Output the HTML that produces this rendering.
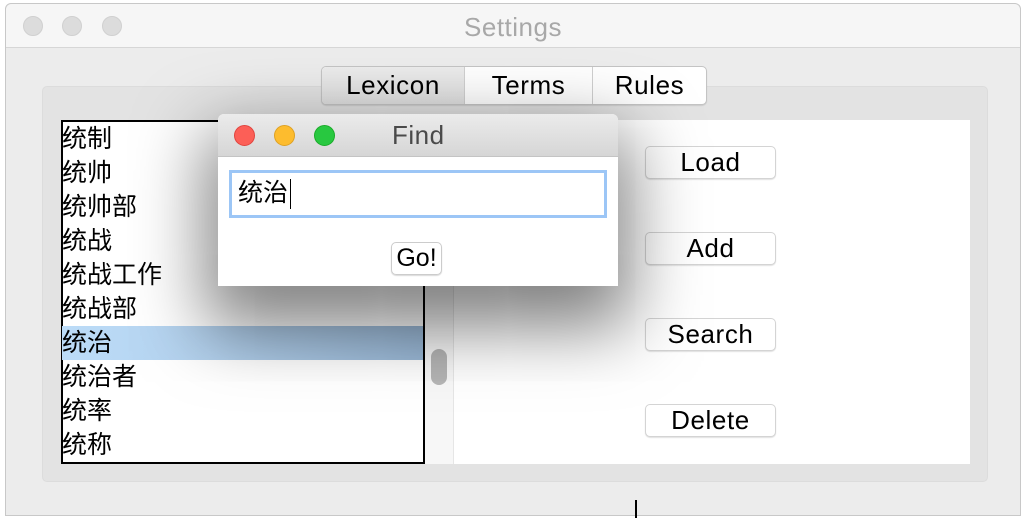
<!DOCTYPE html>
<html><head><meta charset="utf-8"><style>
*{margin:0;padding:0;box-sizing:border-box}
body{width:1028px;height:518px;background:#fff;position:relative;overflow:hidden;font-family:"Liberation Sans","Noto Sans CJK SC",sans-serif}
.win{position:absolute;left:5px;top:3px;width:1016px;height:513px;background:#ececec;border:1px solid #c8c8c8;border-radius:6px 6px 0 0}
.tb{position:absolute;left:0;top:0;width:100%;height:44px;border-bottom:1px solid #d6d6d6;background:#f6f6f6;border-radius:6px 6px 0 0}
.dot{position:absolute;top:12px;width:20px;height:20px;border-radius:50%;background:#dcdcdc;border:1px solid #d0d0d0}
.title{position:absolute;left:0;width:100%;top:8px;text-align:center;font-size:26px;letter-spacing:0.5px;color:#a8a8a8}
.abs{position:absolute}
.group{left:42px;top:86px;width:946px;height:396px;background:#e3e3e3;border-radius:5px;border:1px solid #dcdcdc}
.tabs{left:321px;top:66px;width:386px;height:39px;border:1px solid #c4c4c4;border-radius:5px;background:#fff;display:flex;font-size:26px;letter-spacing:0.6px;overflow:hidden;box-shadow:0 1px 1px rgba(0,0,0,.1)}
.tabs div{display:flex;align-items:center;justify-content:center;border-right:1px solid #d0d0d0}
.list{left:61px;top:120px;width:364px;height:344px;border:2px solid #000;background:#fff;font-size:25px;line-height:34px}
.list div{padding-left:0;height:34px;margin-left:-1px}
.sel{background:linear-gradient(90deg,#bcdcf8,#b4d2ee 40%,#9ab8d6)}
.btn{left:645px;width:131px;height:33px;background:#fff;border:1px solid #d4d4d4;border-radius:5px;box-shadow:0 1px 1px rgba(0,0,0,.12);font-size:26px;letter-spacing:0.6px;text-align:center;line-height:31px}
.find{left:218px;top:114px;width:400px;height:172px;background:#fff;border-radius:6px 6px 0 0;box-shadow:0 30px 70px 12px rgba(0,0,0,.5)}
.fbar{left:0;top:0;width:400px;height:43px;border-bottom:1px solid #c4c4c4;background:linear-gradient(#ebebeb,#d6d6d6);border-radius:6px 6px 0 0}
</style></head><body>
<div class="win">
<div class="tb">
<div class="dot" style="left:17px"></div><div class="dot" style="left:56px"></div><div class="dot" style="left:96px"></div>
<div class="title">Settings</div></div>
</div>
<div class="abs group"></div>
<div class="abs tabs"><div style="width:143px;background:linear-gradient(#ececec,#e0e0e0)">Lexicon</div><div style="width:128px">Terms</div><div style="flex:1;border:none">Rules</div></div>
<div class="abs" style="left:424px;top:120px;width:30px;height:344px;background:#f7f7f7;border-right:1px solid #e6e6e6"></div>
<div class="abs" style="left:431px;top:349px;width:16px;height:36px;border-radius:8px;background:#b5b5b5"></div>
<div class="abs" style="left:454px;top:120px;width:516px;height:344px;background:#fff"></div>
<div class="abs list">
<div>统制</div><div>统帅</div><div>统帅部</div><div>统战</div><div>统战工作</div><div>统战部</div><div class="sel">统治</div><div>统治者</div><div>统率</div><div>统称</div></div>
<div class="abs btn" style="top:146px">Load</div>
<div class="abs btn" style="top:232px">Add</div>
<div class="abs btn" style="top:318px">Search</div>
<div class="abs btn" style="top:404px">Delete</div>
<div class="abs find">
<div class="abs fbar">
<div class="abs" style="left:16px;top:11px;width:21px;height:21px;border-radius:50%;background:#fc5f57;border:1px solid #e0443e"></div>
<div class="abs" style="left:56px;top:11px;width:21px;height:21px;border-radius:50%;background:#fdbc2e;border:1px solid #dea123"></div>
<div class="abs" style="left:96px;top:11px;width:21px;height:21px;border-radius:50%;background:#28c840;border:1px solid #1aab29"></div>
<div class="abs" style="left:174px;top:6px;font-size:26px;letter-spacing:0.5px;color:#4a4a4a">Find</div>
</div>
<div class="abs" style="left:11px;top:56px;width:378px;height:48px;border:3px solid #9cc6f6;background:#fff;font-size:25px;line-height:40px;padding-left:6px">统治<span style="display:inline-block;width:1px;height:30px;background:#000;vertical-align:middle;margin-left:2px"></span></div>
<div class="abs" style="left:173px;top:128px;width:51px;height:33px;border:1px solid #ccc;border-radius:5px;box-shadow:0 1px 1px rgba(0,0,0,.15);font-size:25px;text-align:center;line-height:31px">Go!</div>
</div>
<div class="abs" style="left:635px;top:500px;width:2px;height:18px;background:#000"></div>
</body></html>
